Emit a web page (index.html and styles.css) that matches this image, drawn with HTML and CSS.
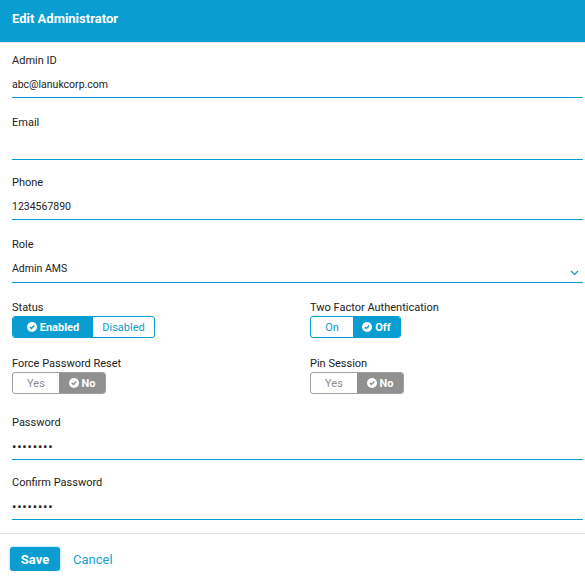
FILE: index.html
```html
<!DOCTYPE html>
<html>
<head>
<meta charset="utf-8">
<link rel="stylesheet" href="styles.css">
</head>
<body>
<div class="header"><h1 class="title">Edit Administrator</h1></div>
<form class="form">
  <div class="field first">
    <div class="label">Admin ID</div>
    <div class="input">abc@lanukcorp.com</div>
  </div>
  <div class="field email">
    <div class="label">Email</div>
    <div class="input">&nbsp;</div>
  </div>
  <div class="field phone">
    <div class="label">Phone</div>
    <div class="input">1234567890</div>
  </div>
  <div class="field role">
    <div class="label">Role</div>
    <div class="input select">Admin AMS
      <svg class="chev" width="9" height="6" viewBox="0 0 9 6"><path d="M1 1 L4.5 4.5 L8 1" fill="none" stroke="#1aa3d6" stroke-width="1.3"/></svg>
    </div>
  </div>
  <div class="grid">
    <div class="cell">
      <div class="label">Status</div>
      <div class="toggle blue">
        <span class="seg on w81"><svg class="chk" width="10" height="10" viewBox="0 0 10 10"><circle cx="5" cy="5" r="5" fill="#fff"/><path d="M2.8 5.1 L4.4 6.6 L7.3 3.6" fill="none" stroke="#0a9dd1" stroke-width="1.4"/></svg>Enabled</span>
        <span class="seg w61">Disabled</span>
      </div>
    </div>
    <div class="cell">
      <div class="label">Two Factor Authentication</div>
      <div class="toggle blue">
        <span class="seg w43">On</span>
        <span class="seg on w47"><svg class="chk" width="10" height="10" viewBox="0 0 10 10"><circle cx="5" cy="5" r="5" fill="#fff"/><path d="M2.8 5.1 L4.4 6.6 L7.3 3.6" fill="none" stroke="#0a9dd1" stroke-width="1.4"/></svg>Off</span>
      </div>
    </div>
    <div class="cell">
      <div class="label">Force Password Reset</div>
      <div class="toggle grey">
        <span class="seg w46">Yes</span>
        <span class="seg on w46"><svg class="chk" width="10" height="10" viewBox="0 0 10 10"><circle cx="5" cy="5" r="5" fill="#fff"/><path d="M2.8 5.1 L4.4 6.6 L7.3 3.6" fill="none" stroke="#909090" stroke-width="1.4"/></svg>No</span>
      </div>
    </div>
    <div class="cell">
      <div class="label">Pin Session</div>
      <div class="toggle grey">
        <span class="seg w46">Yes</span>
        <span class="seg on w46"><svg class="chk" width="10" height="10" viewBox="0 0 10 10"><circle cx="5" cy="5" r="5" fill="#fff"/><path d="M2.8 5.1 L4.4 6.6 L7.3 3.6" fill="none" stroke="#909090" stroke-width="1.4"/></svg>No</span>
      </div>
    </div>
  </div>
  <div class="field pw">
    <div class="label">Password</div>
    <div class="input dots">••••••••</div>
  </div>
  <div class="field pw2">
    <div class="label">Confirm Password</div>
    <div class="input dots">••••••••</div>
  </div>
</form>
<div class="footer">
  <button class="save" type="button">Save</button>
  <a class="cancel">Cancel</a>
</div>
</body>
</html>
```
FILE: styles.css
```css
* { box-sizing: border-box; }
body {
  margin: 0;
  font-family: Roboto, "Liberation Sans", Arial, sans-serif;
  color: #222;
  background: #fff;
  width: 585px;
}
.header {
  height: 43px;
  background: #0a9dd1;
  border-bottom: 1px solid #e2e2e2;
  padding: 11px 12px 0;
}
.title {
  margin: 0;
  font-size: 13px;
  font-weight: bold;
  color: #fff;
  line-height: 16px;
}
.form {
  margin: 0;
  padding: 0 2px 0 12px;
}
.field { margin-top: 17px; }
.field.first { margin-top: 11px; }
.field.email { margin-top: 18px; }
.field.phone { margin-top: 16px; }
.field.role { margin-top: 18px; }
.field.pw { margin-top: 22px; }
.field.pw2 { margin-top: 16px; }
.label {
  font-size: 11px;
  line-height: 14px;
  color: #222;
}
.input {
  font-size: 10.5px;
  line-height: 13px;
  height: 30px;
  padding: 10px 0 6px;
  border-bottom: 1px solid #0a9dd1;
  color: #222;
}
.select {
  display: flex;
  justify-content: space-between;
  align-items: flex-end;
  height: 31px;
  padding-bottom: 7px;
}
.chev { margin-right: 4px; margin-bottom: -1px; }
.dots {
  font-size: 13px;
  letter-spacing: 0.8px;
}
.grid {
  display: grid;
  grid-template-columns: 298px 1fr;
  margin-top: 18px;
  row-gap: 19px;
}
.toggle {
  display: inline-flex;
  height: 22px;
  margin-top: 1px;
  border-radius: 3px;
  overflow: hidden;
  border: 1px solid;
}
.toggle.blue { border-color: #0a9dd1; }
.toggle.grey { border-color: #a0a0a0; }
.seg {
  display: flex;
  align-items: center;
  justify-content: center;
  gap: 3px;
  font-size: 11px;
  height: 100%;
}
.blue .seg { color: #0a9dd1; }
.grey .seg { color: #8c8c8c; }
.seg.on { font-weight: bold; color: #fff; }
.blue .seg.on { background: #0a9dd1; }
.grey .seg.on { background: #909090; }
.w81 { width: 80px; }
.w61 { width: 61px; }
.w43 { width: 42px; }
.w47 { width: 47px; }
.w46 { width: 46px; }
.chk { flex: none; }
.footer {
  margin-top: 13px;
  border-top: 1px solid #e0e0e0;
  padding: 13px 10px 0;
  display: flex;
  align-items: center;
  gap: 13px;
}
.save {
  width: 50px;
  height: 24px;
  background: #0a9dd1;
  color: #fff;
  font-family: inherit;
  font-size: 13px;
  font-weight: bold;
  border: none;
  border-radius: 3px;
  box-shadow: 0 0 3px rgba(10,157,209,0.5);
  padding: 0;
}
.cancel {
  color: #1a9fd4;
  font-size: 13px;
}
```
